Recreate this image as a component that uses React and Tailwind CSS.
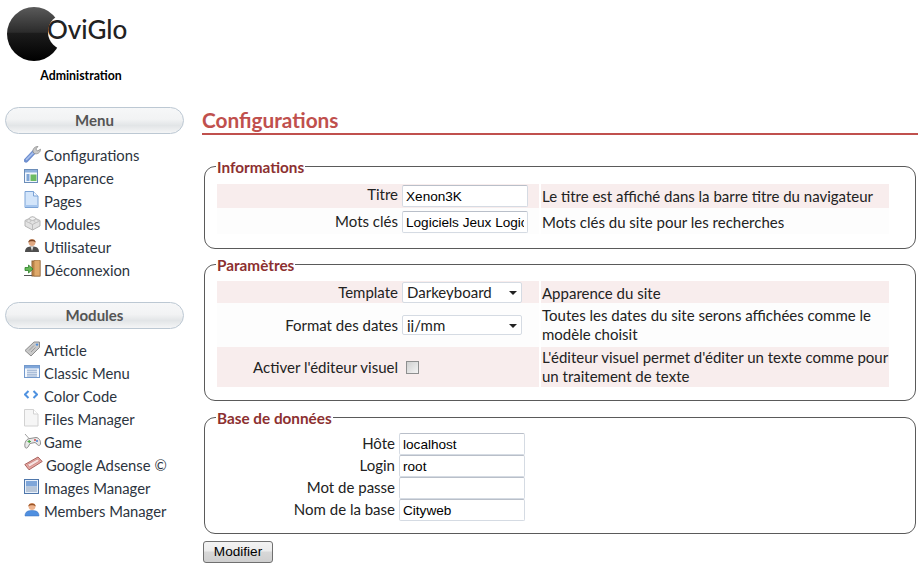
import React from "react";

const Wrench = () => (
  <svg width="18" height="18" viewBox="0 0 18 18">
    <path d="M2 15.5 L10 7" stroke="#6f8fcf" strokeWidth="4.4" strokeLinecap="round" />
    <path d="M2.5 14.5 L9.5 7.5" stroke="#a9c2ee" strokeWidth="1.6" strokeLinecap="round" />
    <path d="M9 7 C8.5 4 10.5 1.5 14 1.5 L11.8 4 L13.5 6 L16.5 4.2 C16.5 7.5 13.5 9.5 10.5 8.6 Z" fill="#c9c9c9" stroke="#8a8a8a" strokeWidth="0.8" />
  </svg>
);
const Layout = () => (
  <svg width="15" height="15" viewBox="0 0 15 15">
    <rect x="0.5" y="0.5" width="13" height="13" fill="#f2f7fd" stroke="#6b8db8" />
    <rect x="1" y="1" width="12" height="2.5" fill="#8fb2dd" />
    <rect x="2.5" y="5" width="3" height="7" fill="#7fa6d6" />
    <rect x="6.5" y="5.5" width="6" height="6.5" fill="#6cbb62" />
  </svg>
);
const Page = () => (
  <svg width="15" height="18" viewBox="0 0 15 18">
    <path d="M1 .5 H9.5 L14 5 V16.5 H1 Z" fill="#d3e5fa" stroke="#7ba3d6" />
    <path d="M9.5 .5 V5 H14" fill="#f0f6fe" stroke="#7ba3d6" />
    <rect x="1.5" y="14" width="12" height="2" fill="#a6c6ee" />
  </svg>
);
const Brick = () => (
  <svg width="17" height="16" viewBox="0 0 17 16">
    <path d="M8.5 2 L16 5.5 V11 L8.5 15 L1 11 V5.5 Z" fill="#e2e2e2" stroke="#b5b5b5" />
    <path d="M1 5.5 L8.5 9.5 L16 5.5 M8.5 9.5 V15" fill="none" stroke="#bdbdbd" />
    <ellipse cx="8.5" cy="3.6" rx="3" ry="1.8" fill="#f4f4f4" stroke="#b5b5b5" />
    <ellipse cx="4.8" cy="6" rx="2.2" ry="1.2" fill="#f4f4f4" stroke="#c2c2c2" />
    <ellipse cx="12.2" cy="6" rx="2.2" ry="1.2" fill="#f4f4f4" stroke="#c2c2c2" />
  </svg>
);
const UserDark = () => (
  <svg width="16" height="15" viewBox="0 0 16 15">
    <path d="M1 14 C1 9.5 4 8.5 8 8.5 C12 8.5 15 9.5 15 14 Z" fill="#4d4d4d" />
    <path d="M6.5 8.5 L8 13 L9.5 8.5 Z" fill="#ddd" />
    <circle cx="8" cy="4.5" r="3.4" fill="#e0a983" />
    <path d="M4.3 4.5 C4 .5 12 .5 11.7 4.5 C10 2.8 6 2.8 4.3 4.5 Z" fill="#7a4526" />
  </svg>
);
const Door = () => (
  <svg width="17" height="17" viewBox="0 0 17 17">
    <rect x="8" y="1" width="8" height="15" fill="#c98d4e" stroke="#8c6034" />
    <path d="M10 .5 L16 0 V16 H10 Z" fill="#dfa869" stroke="#9b6d3c" strokeWidth=".6" />
    <path d="M0 15.5 H8" stroke="#555" strokeWidth="1" />
    <path d="M1 7.5 H4.5 V5 L9 9 L4.5 13 V10.5 H1 Z" fill="#63b956" stroke="#2f7d2a" strokeWidth=".8" />
  </svg>
);
const Tag = () => (
  <svg width="17" height="16" viewBox="0 0 17 16">
    <path d="M1 9.5 L10 1 H15.5 V6.5 L7 15 Z" fill="#c9c9c9" stroke="#8c8c8c" />
    <path d="M5 9.5 L10 4.5 M7 11 L11.5 6.5" stroke="#9b9b9b" strokeWidth="1" />
    <circle cx="13" cy="3.6" r="1.2" fill="#4f8fdc" />
  </svg>
);
const ListWin = () => (
  <svg width="16" height="14" viewBox="0 0 16 14">
    <rect x="0.5" y="0.5" width="15" height="12" fill="#f4f8fd" stroke="#7399cc" />
    <rect x="1" y="1" width="14" height="2.4" fill="#7fa6d9" />
    <path d="M3 5.2 H13 M3 7.2 H13 M3 9.2 H13 M3 11 H13" stroke="#7f9cc4" strokeWidth=".9" />
  </svg>
);
const CodeIcon = () => (
  <svg width="14" height="9" viewBox="0 0 14 9">
    <path d="M4.5 1 L1 4.5 L4.5 8 M9.5 1 L13 4.5 L9.5 8" fill="none" stroke="#4f92e0" strokeWidth="2" />
  </svg>
);
const BlankFile = () => (
  <svg width="15" height="18" viewBox="0 0 15 18">
    <path d="M.5 .5 H9.5 L14 5 V17 H.5 Z" fill="#f6f6f6" stroke="#d2d2d2" />
    <path d="M9.5 .5 V5 H14" fill="#fff" stroke="#d2d2d2" />
  </svg>
);
const Gamepad = () => (
  <svg width="17" height="16" viewBox="0 0 17 16">
    <path d="M1 1 L5 5.5" stroke="#888" strokeWidth=".8" />
    <path d="M1 14 C0 9 3 5.5 6 5.5 L12 4.5 C15 4.5 17 8 16.5 11 C16 13 14 13 13 11 L11 9.5 L6 10.5 L4 14 C3 15.5 1.5 15.5 1 14 Z" fill="#e8e8e8" stroke="#8f8f8f" />
    <path d="M3.5 8.5 H7 M5.2 7 V10" stroke="#4aa945" strokeWidth="1.2" />
    <circle cx="11" cy="7" r="1" fill="#d04a4a" />
    <circle cx="13" cy="8" r="1" fill="#4a7ad0" />
  </svg>
);
const Keyboard = () => (
  <svg width="19" height="15" viewBox="0 0 19 15">
    <path d="M.8 8.5 L14 1 L18.2 5.5 L5 13.8 Z" fill="#e9a9a4" stroke="#a8645f" />
    <path d="M3.5 8.5 L13.5 3 L15.5 5 L5.5 11 Z" fill="#f6e3e1" stroke="#c47b75" strokeWidth=".7" />
  </svg>
);
const ImageWin = () => (
  <svg width="15" height="15" viewBox="0 0 15 15">
    <rect x="0.5" y="0.5" width="14" height="14" fill="#e8f0fa" stroke="#4f77ab" />
    <rect x="2" y="2" width="11" height="5.5" fill="#7fa6d9" />
    <rect x="2" y="7.5" width="11" height="5.5" fill="#b8c6d8" />
  </svg>
);
const UserBlue = () => (
  <svg width="16" height="15" viewBox="0 0 16 15">
    <path d="M1 14 C1 9.5 4 8.5 8 8.5 C12 8.5 15 9.5 15 14 Z" fill="#4f8fe0" stroke="#3a6fba" strokeWidth=".5" />
    <circle cx="8" cy="4.5" r="3.4" fill="#eeb38d" />
    <path d="M4.3 4.5 C4 .5 12 .5 11.7 4.5 C10 2.8 6 2.8 4.3 4.5 Z" fill="#9a5426" />
  </svg>
);

const Logo = () => (
  <svg width="56" height="56" viewBox="0 0 56 56" className="block">
    <defs>
      <linearGradient id="lg" x1="0" y1="0" x2="0" y2="1">
        <stop offset="0" stopColor="#5a5a5a" />
        <stop offset="0.47" stopColor="#2b2b2b" />
        <stop offset="0.48" stopColor="#1c1c1c" />
        <stop offset="1" stopColor="#000" />
      </linearGradient>
      <mask id="bite">
        <rect width="56" height="56" fill="#fff" />
        <circle cx="60" cy="26" r="18" fill="#000" />
      </mask>
    </defs>
    <circle cx="28" cy="28" r="27" fill="url(#lg)" mask="url(#bite)" />
  </svg>
);

const Pill = ({ children, className = "" }) => (
  <div className={"ml-[5px] flex h-[27px] w-[179px] items-center justify-center rounded-full border border-[#bcc8d3] bg-[linear-gradient(to_bottom,#f6f7f8_0%,#f2f3f4_45%,#e2e5e7_70%,#f4f5f6_100%)] text-[15px] font-bold text-[#555] " + className}>
    {children}
  </div>
);

const NavItem = ({ icon, label, pl = "" }) => (
  <div className="flex h-[23px] items-center text-[14.8px] text-[#2c3440]">
    <span className="flex h-[23px] w-[20px] shrink-0 -translate-y-[2px] items-center justify-start">{icon}</span>
    <span className={pl}>{label}</span>
  </div>
);

const Row = ({ label, shaded, h, children, help, labelDy = "", inputDy = "", helpDy = "" }) => (
  <div className={"flex " + h}>
    <div className={"flex w-[322px] items-center " + (shaded ? "bg-[#f8eded]" : "bg-[#fdfdfd]")}>
      <span className={"w-[181px] text-right " + labelDy}>{label}</span>
      <span className={"ml-[4px] flex items-center " + inputDy}>{children}</span>
    </div>
    <div className={"ml-[2px] flex w-[348px] items-center pl-[1px] leading-[19px] " + (shaded ? "bg-[#f8eded]" : "bg-[#fdfdfd]")}>
      <span className={helpDy}>{help}</span>
    </div>
  </div>
);

const TextInput = ({ value, w = "w-[126px]", h = "h-[22px]" }) => (
  <input
    readOnly
    value={value}
    className={"rounded-[2px] border border-[#d5dbe3] border-t-[#b9bfc9] bg-white px-[3px] font-['Liberation_Sans',sans-serif] text-[13.6px] text-black outline-none " + w + " " + h}
  />
);

const Select = ({ value, h }) => (
  <span className={"relative flex w-[120px] items-center rounded-[2px] border border-[#d5dbe3] bg-white " + h}>
    <select value={value} onChange={() => {}} className="h-full w-full -translate-y-[2px] appearance-none bg-transparent pl-[4px] text-[15px] text-[#222] outline-none">
      <option>{value}</option>
    </select>
    <svg width="8" height="4" viewBox="0 0 8 4" className="absolute right-[4px] top-[8px]">
      <path d="M0 0 H8 L4 4 Z" fill="#222" />
    </svg>
  </span>
);

const Group = ({ legend, children, className = "" }) => (
  <fieldset className={"ml-[2px] w-[712px] rounded-[11px] border border-[#5a5a5a] pl-[12px] pr-[26px] " + className}>
    <legend className="-ml-[1px] px-[1px] text-[15.3px] leading-[17px] font-bold text-[#8c3030]">
      <span className="relative top-[1px]">{legend}</span>
    </legend>
    {children}
  </fieldset>
);

const DbRow = ({ label, value, h }) => (
  <div className={"flex items-center " + h}>
    <span className="w-[178px] -translate-y-[1px] text-right">{label}</span>
    <span className="ml-[4px] flex"><TextInput value={value} h="h-[22px]" /></span>
  </div>
);

export default function App() {
  return (
    <div className="flex min-h-[572px] bg-white font-['Lato','Liberation_Sans',sans-serif] text-[15px] text-[#222]">
      <aside className="w-[202px] shrink-0">
        <div className="flex h-[62px] pl-[6px] pt-[6px]">
          <Logo />
          <span className="-ml-[15px] mt-[5px] text-[26px] leading-[36px] font-medium text-[#222]">OviGlo</span>
        </div>
        <div className="mt-[6px] w-[162px] text-center text-[12.3px] leading-[16px] font-bold text-black">Administration</div>
        <Pill className="mt-[23px]">Menu</Pill>
        <nav className="mt-[10px] pl-[24px]">
          <NavItem icon={<Wrench />} label="Configurations" />
          <NavItem icon={<Layout />} label="Apparence" />
          <NavItem icon={<Page />} label="Pages" />
          <NavItem icon={<Brick />} label="Modules" />
          <NavItem icon={<UserDark />} label="Utilisateur" />
          <NavItem icon={<Door />} label="Déconnexion" />
        </nav>
        <Pill className="mt-[20px]">Modules</Pill>
        <nav className="mt-[10px] pl-[24px]">
          <NavItem icon={<Tag />} label="Article" />
          <NavItem icon={<ListWin />} label="Classic Menu" />
          <NavItem icon={<CodeIcon />} label="Color Code" />
          <NavItem icon={<BlankFile />} label="Files Manager" />
          <NavItem icon={<Gamepad />} label="Game" />
          <NavItem icon={<Keyboard />} label="Google Adsense ©" pl="pl-[2px]" />
          <NavItem icon={<ImageWin />} label="Images Manager" />
          <NavItem icon={<UserBlue />} label="Members Manager" />
        </nav>
      </aside>
      <main className="w-[716px] pt-[106px]">
        <h1 className="h-[29px] border-b-2 border-[#c0504d] text-[20.8px] leading-[28px] font-bold text-[#c0504d]">Configurations</h1>
        <Group legend="Informations" className="mt-[23px] h-[91px]">
          <div className="mt-[9px]">
            <Row label="Titre" shaded h="h-[24px]" labelDy="-translate-y-[2px]" help="Le titre est affiché dans la barre titre du navigateur">
              <TextInput value="Xenon3K" />
            </Row>
            <Row label="Mots clés" h="h-[26px]" inputDy="translate-y-[1px]" helpDy="translate-y-[1px]" help="Mots clés du site pour les recherches">
              <TextInput value="Logiciels Jeux Logiciels" />
            </Row>
          </div>
        </Group>
        <Group legend="Paramètres" className="mt-[7px] h-[145px]">
          <div className="mt-[8px]">
            <Row label="Template" shaded h="h-[22px]" helpDy="translate-y-[1px]" help="Apparence du site">
              <Select value="Darkeyboard" h="h-[21px]" />
            </Row>
            <Row label="Format des dates" h="h-[44px]" help="Toutes les dates du site serons affichées comme le modèle choisit">
              <Select value="jj/mm" h="h-[20px]" />
            </Row>
            <Row label="Activer l'éditeur visuel" shaded h="h-[40px]" help="L'éditeur visuel permet d'éditer un texte comme pour un traitement de texte">
              <input type="checkbox" readOnly className="ml-[4px] h-[13px] w-[13px] appearance-none border border-[#8e8f8f] bg-[linear-gradient(135deg,#d0d0d0,#f4f4f4)]" />
            </Row>
          </div>
        </Group>
        <Group legend="Base de données" className="mt-[8px] h-[125px]">
          <div className="mt-[7px]">
            <DbRow label="Hôte" value="localhost" h="h-[22px]" />
            <DbRow label="Login" value="root" h="h-[22px]" />
            <DbRow label="Mot de passe" value="" h="h-[22px]" />
            <DbRow label="Nom de la base" value="Cityweb" h="h-[22px]" />
          </div>
        </Group>
        <button className="ml-[1px] mt-[7px] flex h-[22px] w-[70px] items-center justify-center rounded-[3px] border border-[#707070] bg-[linear-gradient(to_bottom,#f3f3f3,#ececec_45%,#d8d8d8_50%,#cfcfcf)] font-['Liberation_Sans',sans-serif] text-[13.6px] text-black">Modifier</button>
      </main>
    </div>
  );
}
